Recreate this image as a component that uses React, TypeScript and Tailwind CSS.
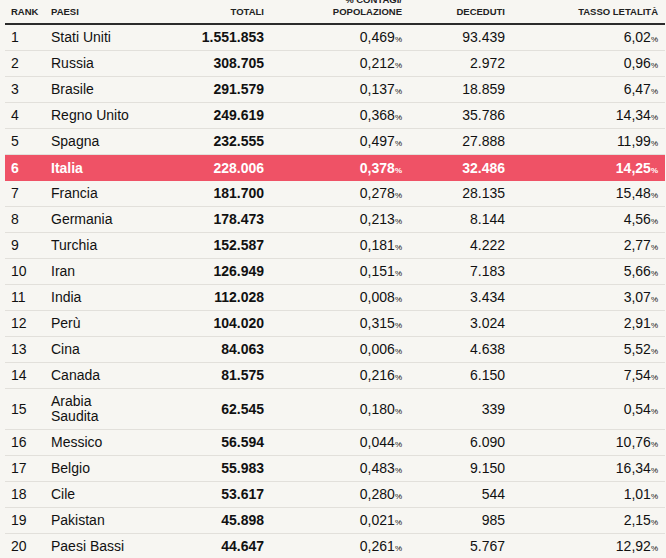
const rows: [number, string, string, string, string, string][] = [
  [1, 'Stati Uniti', '1.551.853', '0,469', '93.439', '6,02'],
  [2, 'Russia', '308.705', '0,212', '2.972', '0,96'],
  [3, 'Brasile', '291.579', '0,137', '18.859', '6,47'],
  [4, 'Regno Unito', '249.619', '0,368', '35.786', '14,34'],
  [5, 'Spagna', '232.555', '0,497', '27.888', '11,99'],
  [6, 'Italia', '228.006', '0,378', '32.486', '14,25'],
  [7, 'Francia', '181.700', '0,278', '28.135', '15,48'],
  [8, 'Germania', '178.473', '0,213', '8.144', '4,56'],
  [9, 'Turchia', '152.587', '0,181', '4.222', '2,77'],
  [10, 'Iran', '126.949', '0,151', '7.183', '5,66'],
  [11, 'India', '112.028', '0,008', '3.434', '3,07'],
  [12, 'Perù', '104.020', '0,315', '3.024', '2,91'],
  [13, 'Cina', '84.063', '0,006', '4.638', '5,52'],
  [14, 'Canada', '81.575', '0,216', '6.150', '7,54'],
  [15, 'Arabia Saudita', '62.545', '0,180', '339', '0,54'],
  [16, 'Messico', '56.594', '0,044', '6.090', '10,76'],
  [17, 'Belgio', '55.983', '0,483', '9.150', '16,34'],
  [18, 'Cile', '53.617', '0,280', '544', '1,01'],
  [19, 'Pakistan', '45.898', '0,021', '985', '2,15'],
  [20, 'Paesi Bassi', '44.647', '0,261', '5.767', '12,92'],
];

const cols = 'grid grid-cols-[40px_92px_133px_138px_103px_154px]';

function Pct() {
  return <span className="text-[8px] leading-none">%</span>;
}

export default function App() {
  return (
    <div
      className="h-screen bg-[#f7f6f2] overflow-hidden"
      style={{ fontFamily: '"Liberation Sans", Arial, sans-serif' }}
    >
      <div className="ml-[5px] w-[660px] -mt-[6px]">
        {/* Header */}
        <div className={`${cols} items-end border-b-2 border-[#2b2b2b] pb-[5px] text-[9.5px] font-bold leading-[12px] text-[#222]`}>
          <div className="pl-[6px]">RANK</div>
          <div className="pl-[6px]">PAESI</div>
          <div className="pr-[6px] text-right">TOTALI</div>
          <div className="pr-[6px] text-right">% CONTAGI/<br />POPOLAZIONE</div>
          <div className="pr-[6px] text-right">DECEDUTI</div>
          <div className="pr-[7px] text-right">TASSO LETALITÀ</div>
        </div>

        {/* Rows */}
        {rows.map(([rank, name, tot, pop, dec, tasso]) => {
          const hi = rank === 6;
          const tall = rank === 15;
          return (
            <div
              key={rank}
              className={`${cols} items-center text-[14px] leading-[15px] ${tall ? 'h-[41px]' : 'h-[26px]'} ${
                hi ? 'bg-[#ef5266] text-white font-bold' : 'border-b border-[#e2e0db] text-[#111]'
              }`}
            >
              <div className="pl-[6px]">{rank}</div>
              <div className="pl-[6px]">{name}</div>
              <div className="pr-[6px] text-right font-bold">{tot}</div>
              <div className="pr-[6px] text-right">{pop}<Pct /></div>
              <div className="pr-[6px] text-right">{dec}</div>
              <div className="pr-[7px] text-right">{tasso}<Pct /></div>
            </div>
          );
        })}
      </div>
    </div>
  );
}
